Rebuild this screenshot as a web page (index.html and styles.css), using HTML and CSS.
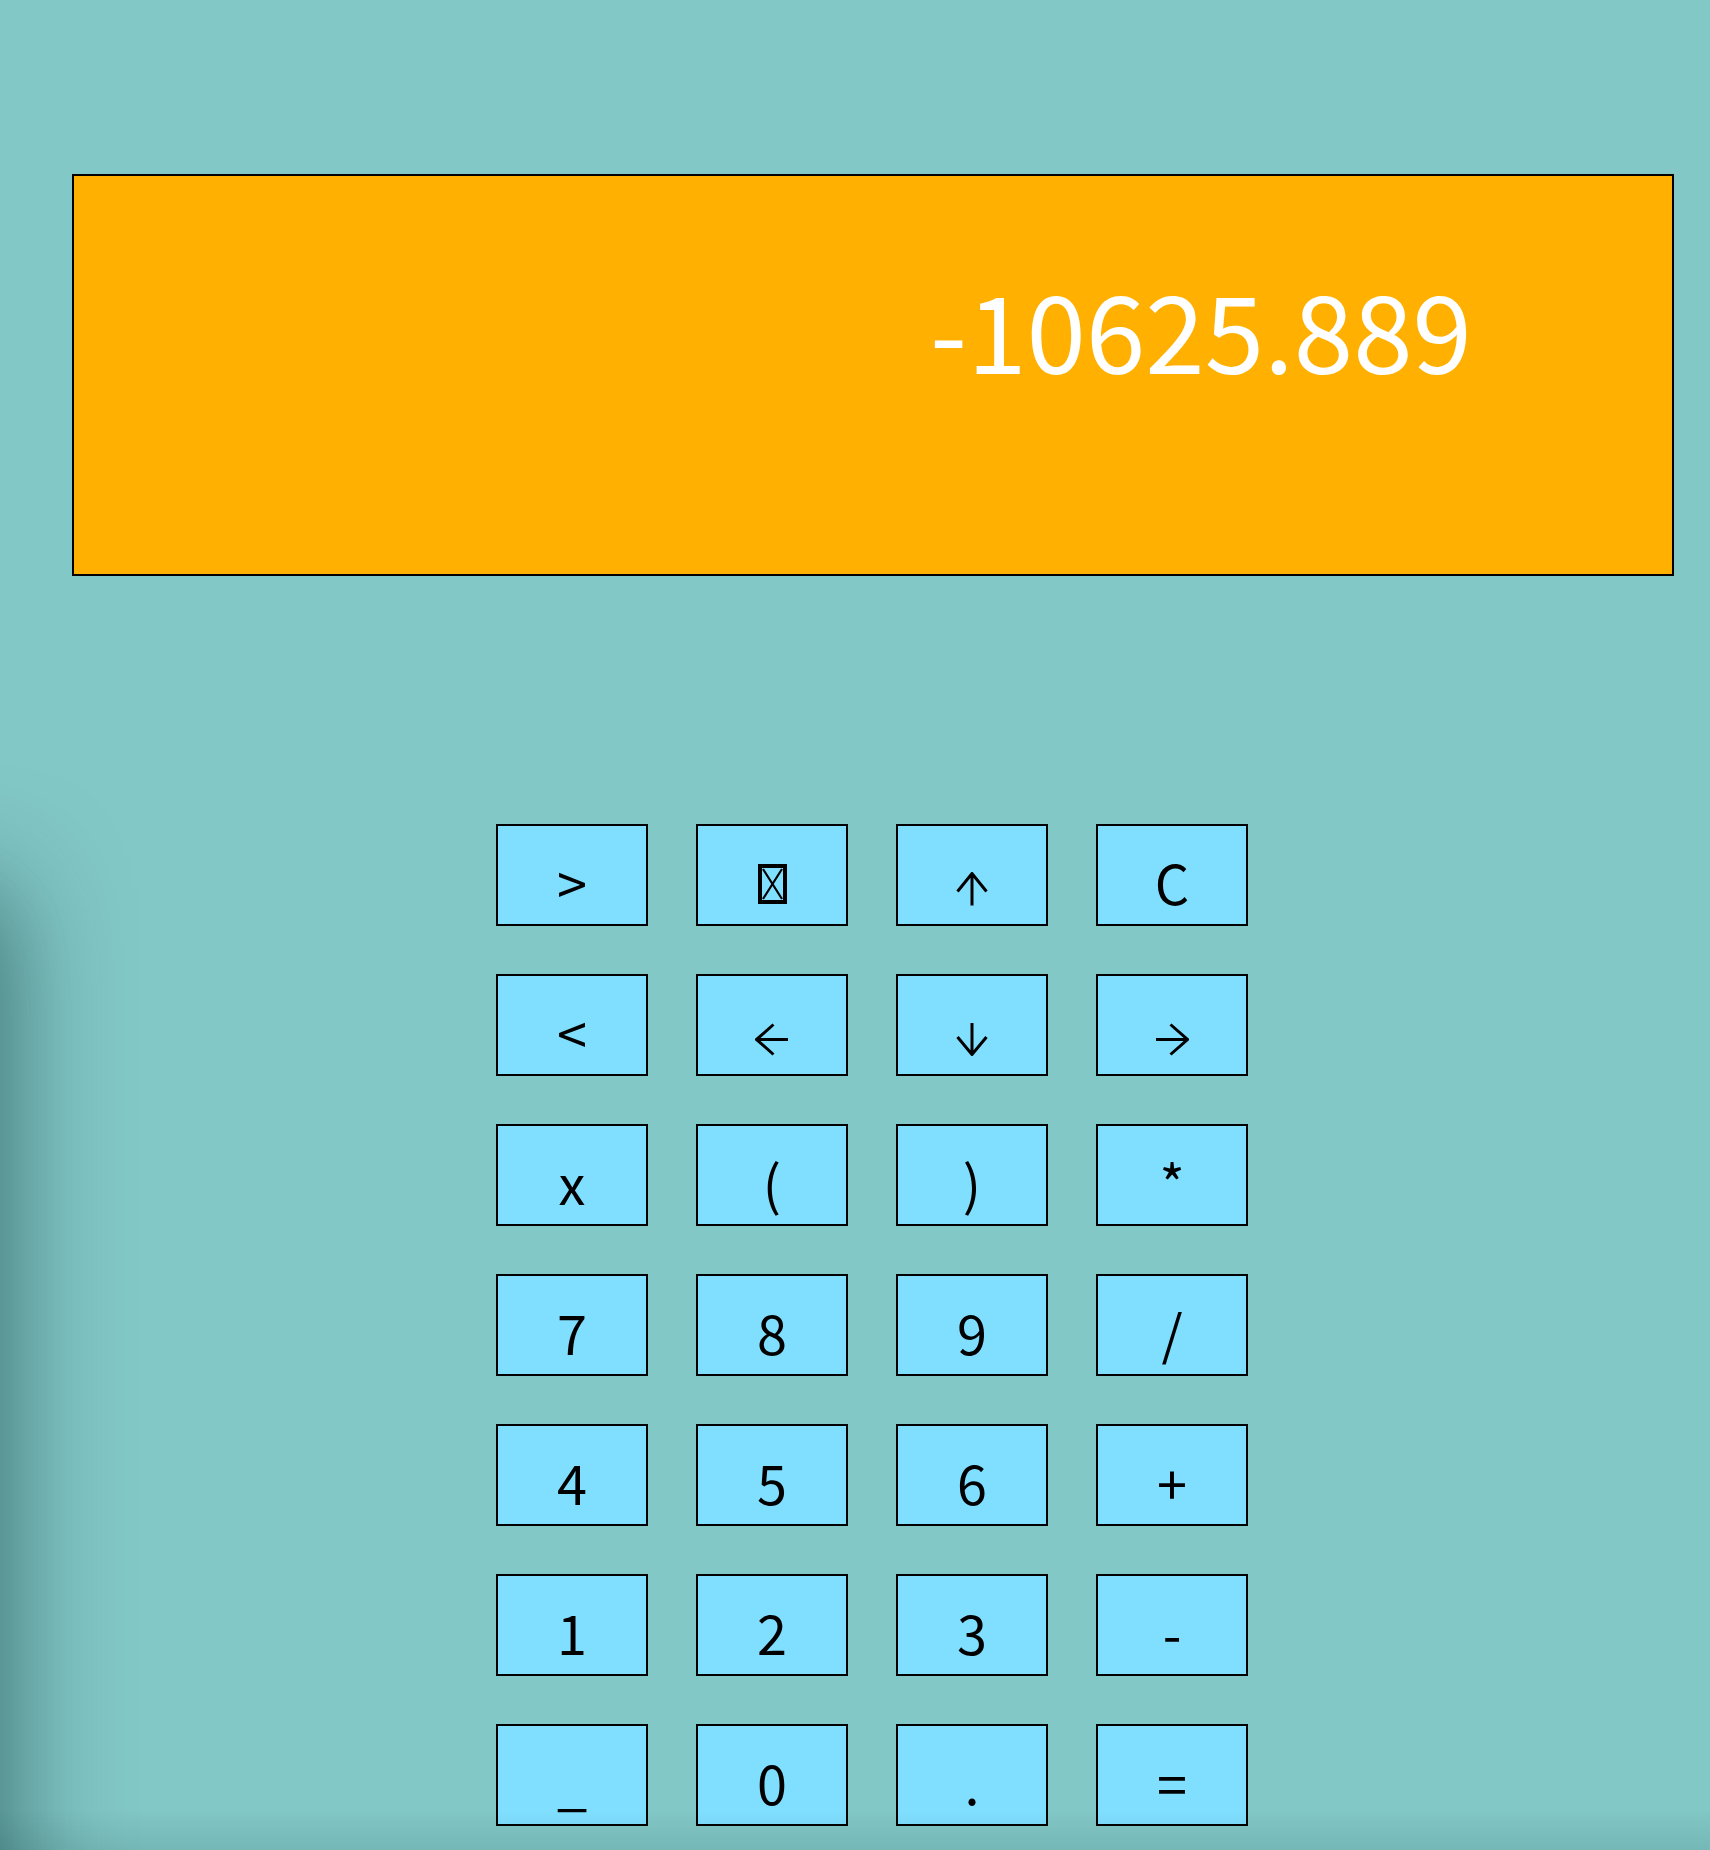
FILE: index.html
```html
<!DOCTYPE html>
<html lang="en">
<head>
<meta charset="utf-8">
<title>Calculator</title>
<link rel="stylesheet" href="styles.css">
</head>
<body>
<div class="edge-shadow"></div>
<div class="bottom-shadow"></div>
<main class="calc">
  <div class="display">-10625.889</div>
  <div class="keys">
    <button class="key">&gt;</button>
    <button class="key" aria-label="backspace"><svg class="tofu" width="29" height="40" viewBox="0 0 29 40"><rect x="2" y="2" width="25" height="36" fill="none" stroke="#000" stroke-width="4"/><path d="M5 5 L24 35 M24 5 L5 35" stroke="#000" stroke-width="2.2" fill="none"/></svg></button>
    <button class="key" aria-label="up"><svg class="arrow" width="32" height="34" viewBox="0 0 32 34"><path d="M16 33.5 V2 M1.5 19.5 L16 1.5 L30.5 19.5" stroke="#000" stroke-width="3" fill="none"/></svg></button>
    <button class="key">C</button>
    <button class="key">&lt;</button>
    <button class="key" aria-label="left"><svg class="arrow" width="34" height="33" viewBox="0 0 34 33"><path d="M33 16.5 H2 M18.5 1.5 L1.5 16.5 L18.5 31.5" stroke="#000" stroke-width="3" fill="none"/></svg></button>
    <button class="key" aria-label="down"><svg class="arrow" width="32" height="33" viewBox="0 0 32 33"><path d="M16 0 V31 M1.5 14 L16 31.5 L30.5 14" stroke="#000" stroke-width="3" fill="none"/></svg></button>
    <button class="key" aria-label="right"><svg class="arrow" width="34" height="33" viewBox="0 0 34 33"><path d="M1 16.5 H32 M15.5 1.5 L32.5 16.5 L15.5 31.5" stroke="#000" stroke-width="3" fill="none"/></svg></button>
    <button class="key">x</button>
    <button class="key">(</button>
    <button class="key">)</button>
    <button class="key">*</button>
    <button class="key">7</button>
    <button class="key">8</button>
    <button class="key">9</button>
    <button class="key">/</button>
    <button class="key">4</button>
    <button class="key">5</button>
    <button class="key">6</button>
    <button class="key">+</button>
    <button class="key">1</button>
    <button class="key">2</button>
    <button class="key">3</button>
    <button class="key">-</button>
    <button class="key">_</button>
    <button class="key">0</button>
    <button class="key">.</button>
    <button class="key">=</button>
  </div>
</main>
</body>
</html>
```
FILE: styles.css
```css
html, body {
  margin: 0;
  padding: 0;
}
body {
  background: #82c8c7;
  font-family: "Noto Sans CJK JP", "Noto Sans", sans-serif;
  height: 1850px;
  overflow: hidden;
}
.calc {
  padding-top: 174px;
}
.display {
  box-sizing: border-box;
  margin-left: 72px;
  width: 1602px;
  height: 402px;
  border: 2px solid #000;
  background: #ffb000;
  color: #fff;
  font-size: 107px;
  line-height: normal;
  text-align: right;
  padding-right: 200px;
  padding-top: 74px;
}
.keys {
  display: grid;
  grid-template-columns: repeat(4, 152px);
  grid-auto-rows: 102px;
  gap: 48px;
  margin-top: 248px;
  margin-left: 496px;
}
.key {
  box-sizing: border-box;
  border: 2px solid #000;
  background: #80dfff;
  color: #000;
  font-family: "Noto Sans CJK JP", "Noto Sans", sans-serif;
  font-size: 54px;
  line-height: normal;
  padding: 12px 0 0 0;
  margin: 0;
  display: flex;
  align-items: center;
  justify-content: center;
}
.arrow {
  display: block;
  margin-top: 16px;
}
.tofu {
  display: block;
  margin-top: 6px;
}
.edge-shadow {
  position: fixed;
  left: -120px;
  top: 900px;
  width: 120px;
  height: 1200px;
  box-shadow: 0 0 110px 10px rgba(0, 40, 40, 0.55);
  pointer-events: none;
}
.bottom-shadow {
  position: fixed;
  left: 0;
  right: 0;
  bottom: 0;
  height: 40px;
  background: linear-gradient(to bottom, rgba(0, 40, 40, 0), rgba(0, 40, 40, 0.1));
  pointer-events: none;
}
```
